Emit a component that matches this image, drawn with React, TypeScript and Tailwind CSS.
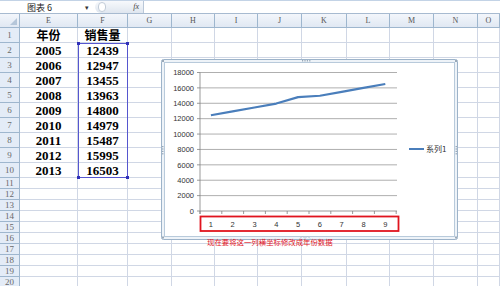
import React from 'react';

const cols = ['E', 'F', 'G', 'H', 'I', 'J', 'K', 'L', 'M', 'N', 'O'];
const years = ['2005', '2006', '2007', '2008', '2009', '2010', '2011', '2012', '2013'];
const sales = [12439, 12947, 13455, 13963, 14800, 14979, 15487, 15995, 16503];

const gridCols = 'grid grid-cols-[20px_58px_50px_44px_43px_43px_44px_45px_43px_44px_44px_1fr]';

const Row: React.FC<{ n: number; tall: boolean; e?: string; f?: string; head?: boolean }> = ({ n, tall, e, f, head }) => (
  <div className={`${gridCols} ${tall ? 'h-[15px]' : 'h-[11px]'}`}>
    <div className="flex items-center justify-center bg-[#e4ecf7] border-r border-b border-[#9eb6ce] text-[9px] leading-none text-[#6a6a6a] font-['Liberation_Serif',serif]">
      {n}
    </div>
    {cols.map((c, i) => (
      <div
        key={c}
        className={`flex items-center justify-center border-r border-b border-[#d0d7e5] leading-none text-black font-bold ${
          head ? "text-[12px] font-['Noto_Sans_CJK_SC',sans-serif]" : "text-[13px] font-['Liberation_Serif',serif]"
        }`}
      >
        {i === 0 ? e : i === 1 ? f : null}
      </div>
    ))}
  </div>
);

const Chart: React.FC = () => {
  const y0 = 211;
  const h = 138.5;
  const x0 = 200;
  const step = 21.8;
  const yOf = (v: number) => y0 - (v / 18000) * h;
  const pts = sales.map((v, i) => `${x0 + (i + 0.5) * step},${yOf(v)}`).join(' ');
  const ticks = [0, 2000, 4000, 6000, 8000, 10000, 12000, 14000, 16000, 18000];

  return (
    <svg className="w-full h-full" viewBox="161 59 297 181" fontFamily="'Liberation Sans', sans-serif">
      <rect x={161.5} y={59.5} width={296} height={180} rx={2} fill="#eef3f8" stroke="#9db3c9" />
      <rect x={164.5} y={62.5} width={290} height={174} fill="#ffffff" stroke="#b8cadb" />
      {/* resize handles */}
      <g fill="#9aa9b8">
        {[0, 1, 2, 3].map((k) => (
          <rect key={`t${k}`} x={302 + k * 2.4} y={60} width={1.2} height={1.5} />
        ))}
        {[0, 1, 2, 3].map((k) => (
          <rect key={`l${k}`} x={162} y={146 + k * 2.4} width={1.5} height={1.2} />
        ))}
        {[0, 1, 2, 3].map((k) => (
          <rect key={`r${k}`} x={455.5} y={146 + k * 2.4} width={1.5} height={1.2} />
        ))}
        <rect x={162} y={60} width={2} height={2} />
        <rect x={455} y={60} width={2} height={2} />
        <rect x={162} y={236.5} width={2} height={2} />
        <rect x={455} y={236.5} width={2} height={2} />
      </g>
      <path d="M300 238.5 q2.5 -4 5 0 q2.5 -4 5 0" fill="none" stroke="#b4c3d2" strokeWidth={0.8} />
      {/* gridlines + y labels */}
      {ticks.map((t, i) => {
        const y = y0 - (i * h) / 9;
        return (
          <g key={t}>
            <line x1={x0} x2={397} y1={y} y2={y} stroke={i === 0 ? '#808080' : '#9a9a9a'} strokeWidth={0.8} />
            <line x1={197} x2={x0} y1={y} y2={y} stroke="#808080" strokeWidth={0.8} />
            <text x={194} y={y + 2.7} fontSize={7.5} textAnchor="end" fill="#333333">
              {t}
            </text>
          </g>
        );
      })}
      <line x1={x0} x2={x0} y1={y0 - h} y2={y0 + 3} stroke="#808080" strokeWidth={0.8} />
      {Array.from({ length: 10 }).map((_, i) => (
        <line key={i} x1={x0 + i * step} x2={x0 + i * step} y1={y0} y2={y0 + 3} stroke="#808080" strokeWidth={0.8} />
      ))}
      {sales.map((_, i) => (
        <text key={i} x={x0 + (i + 0.5) * step} y={226.5} fontSize={7.5} textAnchor="middle" fill="#333333">
          {i + 1}
        </text>
      ))}
      <polyline points={pts} fill="none" stroke="#4a7ebb" strokeWidth={2.2} strokeLinejoin="round" />
      {/* legend */}
      <line x1={409} x2={424} y1={149} y2={149} stroke="#4a7ebb" strokeWidth={2} />
      <text x={426} y={152} fontSize={8} fill="#333333" fontFamily="'Noto Sans CJK SC', sans-serif">
        系列1
      </text>
      {/* red box round the x labels */}
      <rect x={200.5} y={216.5} width={198} height={14.5} fill="none" stroke="#e0141e" strokeWidth={1.8} />
    </svg>
  );
};

const App: React.FC = () => {
  return (
    <div className="relative w-[500px] h-[286px] overflow-hidden bg-white font-['Liberation_Sans',sans-serif]">
      {/* formula bar */}
      <div className="flex h-[14px] border-t border-b border-t-[#c3d3e6] border-b-[#a7bad0] bg-white">
        <div className="flex items-center w-[95px] pl-[27px] pr-[6px] text-[9px] leading-none text-[#222] font-['Noto_Sans_CJK_SC',sans-serif]">
          <span>图表 6</span>
          <span className="ml-auto text-[7px] text-[#333]">▾</span>
        </div>
        <div className="flex items-center justify-between w-[48px] pl-[3px] pr-[4px] bg-gradient-to-b from-[#f7f9fc] to-[#dfe6ef] rounded-l-full">
          <span className="w-[8px] h-[10px] rounded-full border border-[#c2ccd8] bg-white" />
          <span className="text-[8px] italic leading-none text-[#444] font-['Liberation_Serif',serif]">fx</span>
        </div>
        <div className="flex-1 border-l border-[#b9c7d8] bg-white" />
      </div>

      {/* column headers */}
      <div className={`${gridCols} h-[14px] bg-gradient-to-b from-[#f3f6fb] to-[#dfe7f2]`}>
        <div className="flex items-end justify-end p-[2px] border-r border-b border-[#9eb6ce]">
          <span className="w-0 h-0 border-l-[7px] border-l-transparent border-b-[7px] border-b-[#b5c6d9]" />
        </div>
        {cols.map((c) => (
          <div
            key={c}
            className="flex items-center justify-center border-r border-b border-[#9eb6ce] text-[8px] leading-none text-[#555] font-['Liberation_Serif',serif]"
          >
            {c}
          </div>
        ))}
      </div>

      {/* rows */}
      <Row n={1} tall head e="年份" f="销售量" />
      {years.map((y, i) => (
        <Row key={y} n={i + 2} tall e={y} f={String(sales[i])} />
      ))}
      {Array.from({ length: 10 }).map((_, i) => (
        <Row key={i} n={i + 11} tall={false} />
      ))}

      {/* selection F2:F10 */}
      <div className="absolute left-[78px] top-[43px] w-[50px] h-[135px] flex flex-col justify-between border border-[#5656cf]">
        <div className="flex justify-between -mx-[2px] -mt-[2px]">
          <span className="w-[3px] h-[3px] bg-[#3030b8]" />
          <span className="w-[3px] h-[3px] bg-[#3030b8]" />
        </div>
        <div className="flex justify-between -mx-[2px] -mb-[2px]">
          <span className="w-[3px] h-[3px] bg-[#3030b8]" />
          <span className="w-[3px] h-[3px] bg-[#3030b8]" />
        </div>
      </div>

      {/* floating chart */}
      <div className="absolute left-[161px] top-[59px] w-[297px] h-[181px]">
        <Chart />
      </div>

      {/* annotation */}
      <div className="absolute left-[207px] top-[237px] text-[7.4px] leading-[10px] text-[#e0141e] font-['Noto_Sans_CJK_SC',sans-serif]">
        现在要将这一列横坐标修改成年份数据
      </div>
    </div>
  );
};

export default App;
